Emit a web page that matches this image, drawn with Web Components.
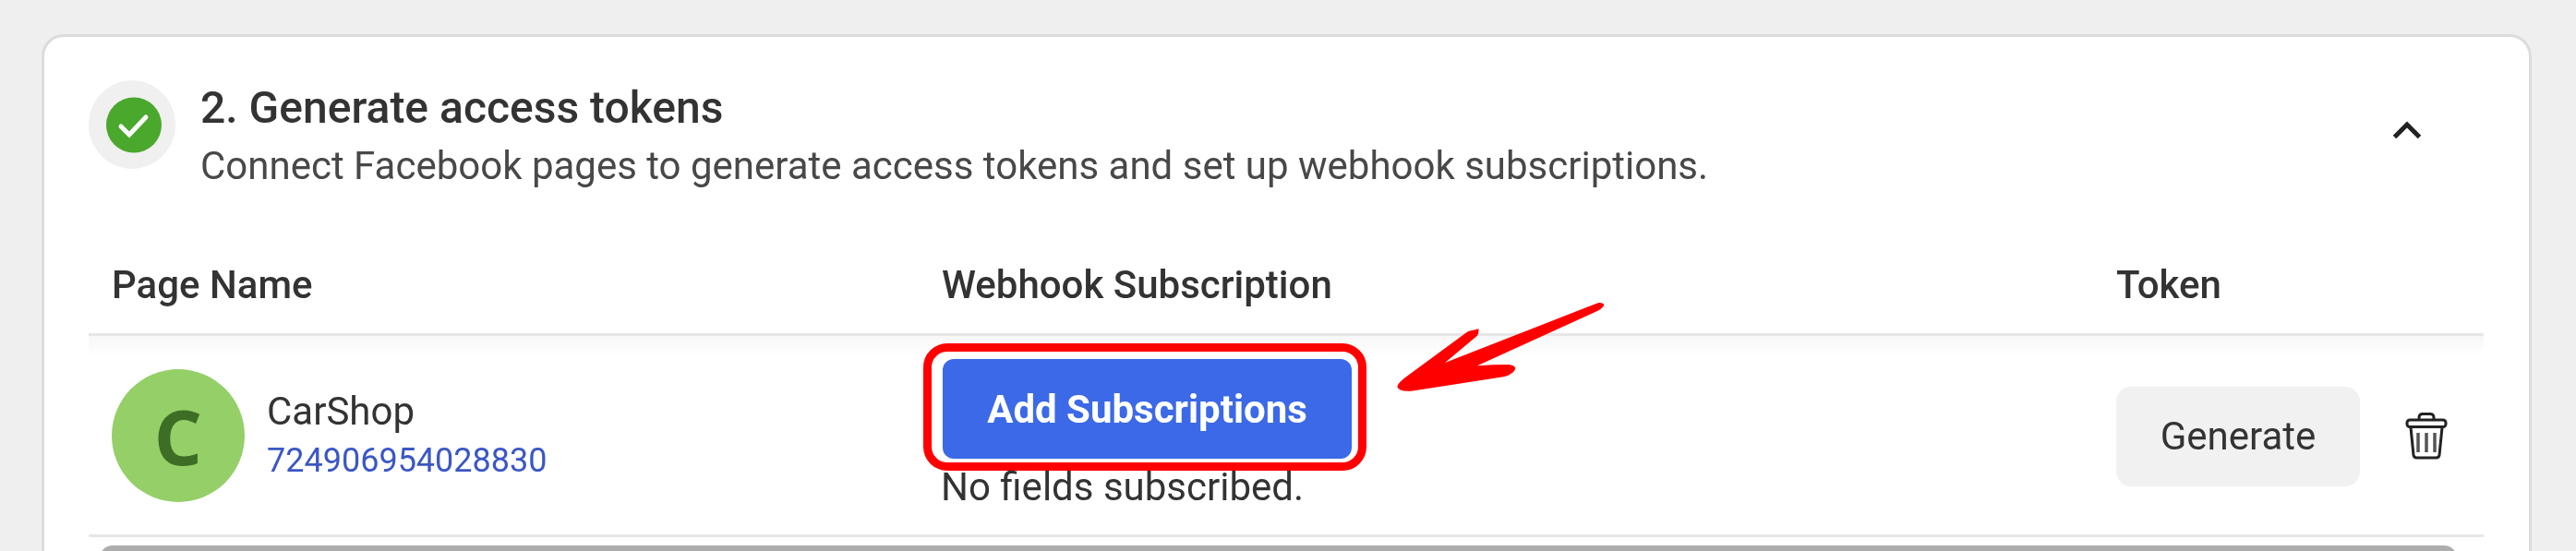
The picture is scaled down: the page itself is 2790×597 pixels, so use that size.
<!DOCTYPE html>
<html>
<head>
<meta charset="utf-8">
<title>Generate access tokens</title>
<style>
    html, body { margin: 0; height: 597px; overflow: hidden; }
    body { background: #efefef; font-family: Roboto, "Liberation Sans", sans-serif; color: #333; }
</style>
</head>
<body>
<token-step>
    <span slot="title">2. Generate access tokens</span>
    <span slot="subtitle">Connect Facebook pages to generate access tokens and set up webhook subscriptions.</span>
    <page-table>
        <page-row name="CarShop" page-id="724906954028830" initial="C"></page-row>
    </page-table>
</token-step>

<script>
class StatusCheck extends HTMLElement {
    constructor() {
        super();
        this.attachShadow({ mode: 'open' });
        this.shadowRoot.innerHTML = `
            <style>
                :host { display: flex; align-items: center; justify-content: center; flex: none;
                    width: 94px; height: 96px; border-radius: 50%; background: #f0f0f0; }
                svg { display: block; width: 60px; height: 61px; margin-left: 4px; filter: blur(.5px); }
            </style>
            <svg viewBox="0 0 60 61">
                <circle cx="30" cy="30.5" r="30" fill="#4aa82c"/>
                <path d="M16 32l9 9 18-19" fill="none" stroke="#fff" stroke-width="5" stroke-linecap="round"/>
            </svg>`;
    }
}
customElements.define('status-check', StatusCheck);

class TokenStep extends HTMLElement {
    constructor() {
        super();
        this.attachShadow({ mode: 'open' });
        this.shadowRoot.innerHTML = `
            <style>
                :host { display: block; box-sizing: border-box; height: 560px; margin: 37px 48px 0 45px;
                    padding: 47px 49px 0 48px; background: #fff; border: 3px solid #dcdcdc; border-bottom: 0;
                    border-radius: 24px 24px 0 0; overflow: hidden; }
                .head { display: flex; height: 96px; }
                .text { margin-left: 27px; filter: blur(.6px); }
                .title { font-size: 48px; font-weight: 500; line-height: 50px; color: #333; margin-top: 5px; }
                .subtitle { font-size: 42px; line-height: 44px; color: #484848; margin-top: 16px; }
                .toggle { margin-left: auto; margin-right: 67px; margin-top: 44px; width: 32px; height: 20px; }
                .toggle svg { display: block; }
            </style>
            <div class="head">
                <status-check></status-check>
                <div class="text">
                    <div class="title"><slot name="title"></slot></div>
                    <div class="subtitle"><slot name="subtitle"></slot></div>
                </div>
                <div class="toggle">
                    <svg width="32" height="20" viewBox="0 0 32 20"><path d="M2.500 17.500L16 4l13.500 13.500" fill="none" stroke="#222" stroke-width="5"/></svg>
                </div>
            </div>
            <slot></slot>`;
    }
}
customElements.define('token-step', TokenStep);

class PageTable extends HTMLElement {
    constructor() {
        super();
        this.attachShadow({ mode: 'open' });
        this.shadowRoot.innerHTML = `
            <style>
                :host { display: block; }
                .cols { display: grid; grid-template-columns: 902px 1269px 1fr; height: 178px; box-sizing: border-box;
                    align-items: end; padding-bottom: 30px; }
                .cols div { padding-left: 25px; font-size: 42px; font-weight: 500; line-height: 44px; color: #333; filter: blur(.6px); }
                .cols div.hook { padding-left: 22px; }
                .line { height: 3px; background: #e6e6e6; }
                .fade { height: 22px; margin-bottom: -22px; background: linear-gradient(#f7f7f7, #fff); }
                .bar { height: 30px; margin: 9px 29px 0 12px; background: #adadad; border-radius: 14px 14px 0 0; }
            </style>
            <div class="cols">
                <div>Page Name</div>
                <div class="hook">Webhook Subscription</div>
                <div>Token</div>
            </div>
            <div class="line"></div>
            <div class="fade"></div>
            <slot></slot>
            <div class="line"></div>
            <div class="bar"></div>`;
    }
}
customElements.define('page-table', PageTable);

class PageRow extends HTMLElement {
    constructor() {
        super();
        this.attachShadow({ mode: 'open' });
    }

    connectedCallback() {
        const name = this.getAttribute('name');
        const pageId = this.getAttribute('page-id');
        const initial = this.getAttribute('initial');

        this.shadowRoot.innerHTML = `
            <style>
                :host { display: grid; grid-template-columns: 902px 1269px 1fr; height: 215px; position: relative; }
                .page { display: flex; align-items: center; padding-left: 25px; }
                .avatar { flex: none; width: 144px; height: 144px; border-radius: 50%; background: #95cf68;
                    display: flex; align-items: center; justify-content: center; filter: blur(.5px);
                    font-family: "Open Sans", sans-serif; font-weight: 700; font-size: 82px; color: #3e6e25; }
                .info { margin-left: 24px; padding-bottom: 2px; filter: blur(.6px); }
                .name { font-size: 42px; line-height: 50px; color: #333; }
                .id { font-size: 36px; line-height: 44px; color: #3a57c4; margin-top: 6px; }
                .sub { padding: 25px 0 0 23px; }
                .add { display: flex; align-items: center; justify-content: center; box-sizing: border-box;
                    width: 443px; height: 108px; border-radius: 12px; background: #3b69e7; position: relative; }
                .label { color: #fff; font-size: 42px; font-weight: 700; filter: blur(.5px); }
                .ring { position: absolute; left: -21px; right: -16px; top: -17px; bottom: -13px;
                    border: 9px solid #f00; border-radius: 26px; }
                .none { font-size: 42px; line-height: 44px; color: #333; margin: 9px 0 0 -2px; filter: blur(.6px); }
                .token { display: flex; align-items: center; padding: 2px 0 0 25px; }
                .gen { display: flex; align-items: center; justify-content: center; width: 264px; height: 108px;
                    border-radius: 16px; background: #f1f1f1; }
                .gen span { font-size: 42px; color: #333; filter: blur(.6px); display: block; }
                .trash { display: block; margin-left: 49px; width: 46px; height: 51px; filter: blur(.4px); }
                .arrow { position: absolute; left: 1404px; top: -51px; width: 260px; height: 130px; }
            </style>
            <div class="page">
                <div class="avatar">${initial}</div>
                <div class="info">
                    <div class="name">${name}</div>
                    <div class="id">${pageId}</div>
                </div>
            </div>
            <div class="sub">
                <div class="add"><span class="label">Add Subscriptions</span><div class="ring"></div></div>
                <div class="none">No fields subscribed.</div>
            </div>
            <div class="token">
                <div class="gen"><span>Generate</span></div>
                <svg class="trash" viewBox="26 15 46 51" fill="none" stroke="#222" stroke-width="3">
                    <rect x="28" y="23" width="42" height="7.500" rx="3"/>
                    <path d="M41 22.500v-2c0-3 2-4 4-4h8c2 0 4 1 4 4v2"/>
                    <path d="M32 31l3 30c.3 2 1.500 3 3.500 3h21c2 0 3.200-1 3.500-3l3-30"/>
                    <path d="M40 37v21M49 37v21M58 37v21" stroke-width="3.500" stroke="#555"/>
                </svg>
            </div>
            <svg class="arrow" viewBox="0 0 780 390">
                <path fill="#f00" d="M695 45Q712 45 712 53Q708 62 690 72L300 250Q350 246 400 246Q424 248 424 260Q415 278 385 286L85 332Q45 335 40 318Q42 305 70 285L270 138L305 130Q305 145 300 152L195 240L680 50Z"/>
            </svg>`;
    }
}
customElements.define('page-row', PageRow);
</script>
</body>
</html>
